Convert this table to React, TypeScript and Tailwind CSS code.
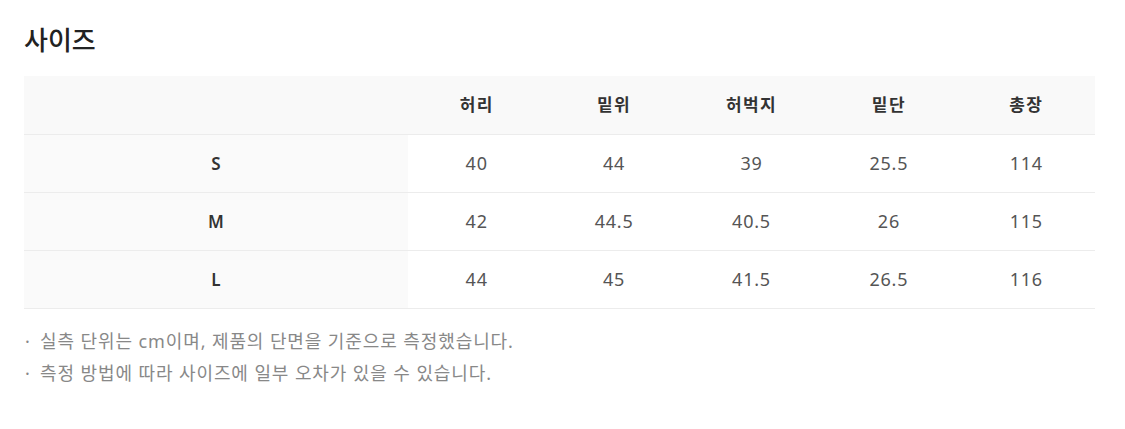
import React from "react";

const headers = ["허리", "밑위", "허벅지", "밑단", "총장"];

const rows: { size: string; values: string[] }[] = [
  { size: "S", values: ["40", "44", "39", "25.5", "114"] },
  { size: "M", values: ["42", "44.5", "40.5", "26", "115"] },
  { size: "L", values: ["44", "45", "41.5", "26.5", "116"] },
];

const notes = [
  "실측 단위는 cm이며, 제품의 단면을 기준으로 측정했습니다.",
  "측정 방법에 따라 사이즈에 일부 오차가 있을 수 있습니다.",
];

const fontStack = {
  fontFamily: '"Noto Sans", "Noto Sans CJK KR", sans-serif',
};

export default function App() {
  return (
    <div
      className="h-[429px] w-[1125px] bg-white pl-[24px] pt-[22px] text-[#222]"
      style={fontStack}
    >
      <h2 className="text-[26px] font-medium leading-[36px] text-[#222]">
        사이즈
      </h2>

      <div className="mt-[18px] w-[1071px]">
        <div className="grid h-[59px] grid-cols-[384px_repeat(5,1fr)] items-center border-b border-[#ececec] bg-[#f9f9f9]">
          <div />
          {headers.map((h) => (
            <div
              key={h}
              className="text-center text-[17px] font-semibold tracking-[1.4px] text-[#333]"
            >
              {h}
            </div>
          ))}
        </div>

        {rows.map((row) => (
          <div
            key={row.size}
            className="grid h-[58px] grid-cols-[384px_repeat(5,1fr)] border-b border-[#ececec]"
          >
            <div className="flex items-center justify-center bg-[#fafafa] text-[17px] font-semibold text-[#333]">
              {row.size}
            </div>
            {row.values.map((v, i) => (
              <div
                key={i}
                className="flex items-center justify-center text-[18px] tracking-[0.8px] text-[#555]"
              >
                {v}
              </div>
            ))}
          </div>
        ))}
      </div>

      <ul className="mt-[16px] flex flex-col text-[18px] leading-[32px] tracking-[0.9px] text-[#888]">
        {notes.map((n) => (
          <li key={n} className="flex">
            <span className="w-[16px] pl-[1px] tracking-normal">·</span>
            <span>{n}</span>
          </li>
        ))}
      </ul>
    </div>
  );
}
